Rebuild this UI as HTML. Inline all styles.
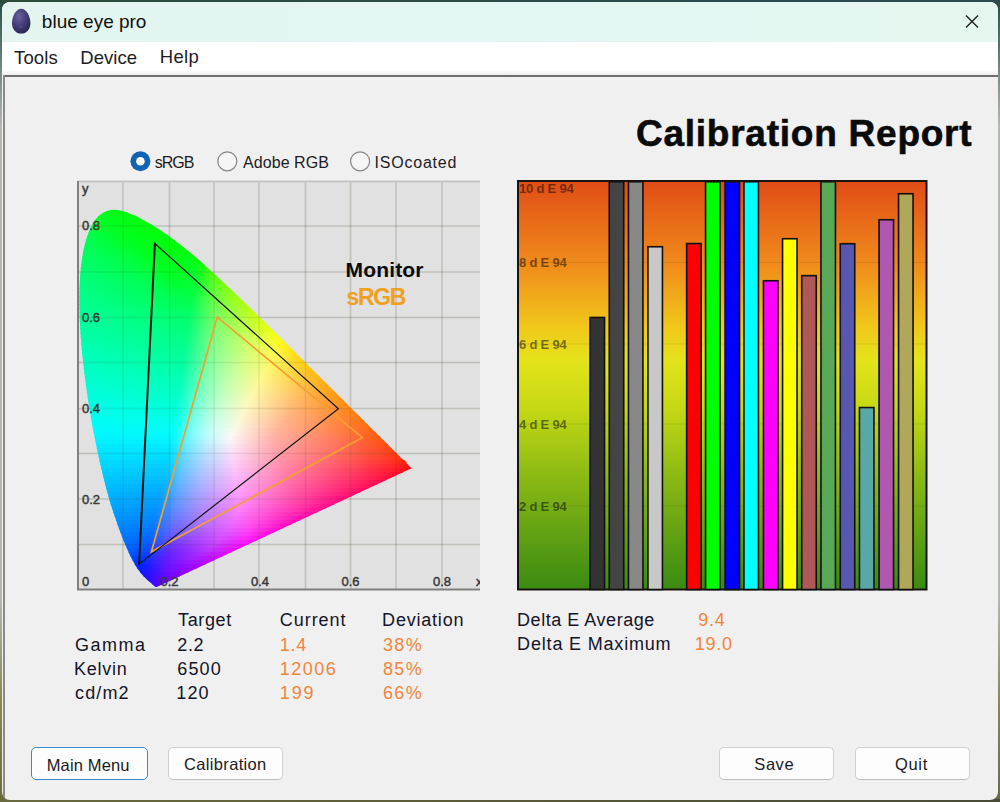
<!DOCTYPE html>
<html><head><meta charset="utf-8">
<style>
*{margin:0;padding:0;box-sizing:border-box}
html,body{width:1000px;height:802px;overflow:hidden;background:linear-gradient(#2a4a44 0px,#2a4a44 2px,#3a6058 20px,#b4b6b0 125px,#b4b6b0 600px,#8a8a50 700px,#6a6a40 802px);font-family:"Liberation Sans",sans-serif}
.abs{position:absolute;white-space:nowrap}
#win{position:absolute;left:2px;top:2px;width:996px;height:798px;border-radius:8px;overflow:hidden;background:#f0f0f0}
#title{position:absolute;left:0;top:0;width:996px;height:40px;background:linear-gradient(90deg,#e4f5f0,#e2f6f4 50%,#e5f7ee)}
#menu{position:absolute;left:0;top:40px;width:996px;height:33px;background:linear-gradient(#ffffff 85%,#ececec)}
#hline{position:absolute;left:1px;top:73px;width:995px;height:2px;background:#6e6e6e}
#vline{position:absolute;left:1px;top:73px;width:2px;height:730px;background:#8a8a8a}
.t16{font-size:16px;color:#1a1a1a}
.tab{font-size:18px;color:#141428;letter-spacing:0.4px}
.or{color:#f2843a}
.btn{position:absolute;height:33px;background:#fdfdfd;border:1px solid #d0d0d0;border-bottom-color:#bdbdbd;border-radius:5px;font-size:16px;color:#1a1a1a;text-align:center;line-height:31px}
</style></head><body>
<div style="position:absolute;left:0;top:0;width:1000px;height:3px;background:linear-gradient(90deg,#2a4a3a,#2e4a48 50%,#2a4a50)"></div>
<div style="position:absolute;left:0;top:799px;width:1000px;height:3px;background:linear-gradient(90deg,#6a6a40,#5a5a38 50%,#4a4a38)"></div>
<div id="win">
 <div id="title"></div>
 <div id="menu"></div>
 <div id="hline"></div>
 <div id="vline"></div>
</div>
<svg class="abs" style="left:0;top:0" width="1000" height="802" viewBox="0 0 1000 802">
 <defs>
  <radialGradient id="egg" cx="0.38" cy="0.32" r="0.8"><stop offset="0" stop-color="#6a62a2"/><stop offset="0.5" stop-color="#423c78"/><stop offset="1" stop-color="#25223f"/></radialGradient>
  <clipPath id="cc"><rect x="78" y="181" width="402" height="409"/></clipPath>
  <clipPath id="hs"><path d="M156.8,587.0 L156.6,587.0 L156.4,587.0 L156.0,586.9 L155.7,586.9 L155.4,586.8 L155.1,586.7 L154.8,586.5 L154.5,586.3 L154.3,586.1 L154.0,585.8 L153.8,585.6 L153.5,585.4 L153.3,585.2 L153.1,585.0 L153.0,584.9 L152.8,584.7 L152.6,584.5 L152.4,584.3 L152.2,584.1 L151.9,583.9 L151.7,583.7 L151.5,583.5 L151.2,583.3 L150.9,583.0 L150.6,582.8 L150.3,582.5 L149.9,582.2 L149.6,581.9 L149.2,581.6 L148.9,581.2 L148.5,580.9 L148.1,580.6 L147.7,580.2 L147.2,579.8 L146.8,579.4 L146.3,579.0 L145.8,578.5 L145.3,578.0 L144.8,577.5 L144.3,577.0 L143.7,576.4 L143.1,575.8 L142.5,575.1 L141.9,574.5 L141.3,573.8 L140.7,573.0 L140.0,572.1 L139.3,571.1 L138.5,570.0 L137.7,568.9 L136.8,567.6 L135.9,566.2 L135.0,564.7 L134.1,563.0 L133.1,561.2 L132.0,559.3 L131.0,557.2 L129.8,555.0 L128.7,552.5 L127.5,549.8 L126.2,546.9 L124.9,543.8 L123.5,540.5 L122.1,536.9 L120.7,533.1 L119.1,528.9 L117.5,524.5 L115.9,519.8 L114.1,514.8 L112.4,509.6 L110.6,503.9 L108.9,498.0 L107.1,491.6 L105.3,485.0 L103.5,477.9 L101.8,470.6 L100.0,463.0 L98.3,455.1 L96.5,446.8 L94.8,438.1 L93.0,429.2 L91.4,420.0 L89.8,410.8 L88.3,401.5 L86.9,392.2 L85.6,382.6 L84.3,372.9 L83.2,363.2 L82.2,353.7 L81.3,344.3 L80.6,335.1 L80.1,326.0 L79.6,317.0 L79.4,308.2 L79.3,299.6 L79.4,291.4 L79.7,283.4 L80.2,275.6 L80.8,268.1 L81.7,260.9 L82.7,254.2 L83.9,248.0 L85.4,242.2 L87.0,236.8 L88.9,231.8 L90.9,227.3 L93.1,223.3 L95.3,219.8 L97.7,217.0 L100.2,214.7 L102.9,212.9 L105.7,211.6 L108.5,210.6 L111.4,209.9 L114.3,209.7 L117.3,209.9 L120.3,210.5 L123.4,211.3 L126.5,212.3 L129.6,213.4 L132.6,214.6 L135.7,216.0 L138.8,217.5 L141.9,219.2 L145.0,220.9 L148.0,222.6 L151.0,224.3 L153.9,226.1 L156.8,227.9 L159.7,229.8 L162.5,231.7 L165.4,233.7 L168.2,235.6 L171.0,237.7 L173.8,239.7 L176.5,241.8 L179.3,243.9 L182.1,246.1 L184.8,248.3 L187.6,250.5 L190.3,252.8 L193.1,255.1 L195.8,257.4 L198.5,259.7 L201.3,262.1 L204.0,264.5 L206.7,266.9 L209.4,269.4 L212.1,271.8 L214.8,274.3 L217.5,276.8 L220.2,279.3 L222.9,281.8 L225.7,284.4 L228.4,286.9 L231.1,289.5 L233.8,292.1 L236.5,294.7 L239.2,297.3 L241.9,299.9 L244.7,302.5 L247.4,305.2 L250.1,307.8 L252.8,310.4 L255.5,313.1 L258.2,315.7 L260.9,318.4 L263.6,321.0 L266.3,323.7 L268.9,326.3 L271.6,329.0 L274.3,331.6 L277.0,334.3 L279.7,336.9 L282.3,339.5 L285.0,342.2 L287.6,344.8 L290.2,347.4 L292.9,350.0 L295.5,352.6 L298.0,355.2 L300.6,357.8 L303.2,360.3 L305.7,362.9 L308.3,365.4 L310.8,367.9 L313.3,370.4 L315.8,372.9 L318.2,375.3 L320.7,377.8 L323.1,380.2 L325.5,382.5 L327.9,384.9 L330.2,387.2 L332.5,389.5 L334.8,391.8 L337.1,394.1 L339.3,396.3 L341.5,398.5 L343.7,400.6 L345.8,402.8 L347.9,404.9 L349.9,406.9 L351.9,408.9 L353.9,410.8 L355.7,412.7 L357.6,414.5 L359.4,416.3 L361.2,418.1 L362.9,419.8 L364.6,421.5 L366.3,423.2 L367.9,424.8 L369.5,426.4 L371.0,427.9 L372.5,429.4 L374.0,430.8 L375.4,432.2 L376.7,433.6 L378.0,434.9 L379.3,436.1 L380.5,437.3 L381.7,438.5 L382.9,439.7 L384.0,440.8 L385.0,441.8 L386.1,442.8 L387.0,443.8 L388.0,444.8 L388.9,445.7 L389.8,446.6 L390.6,447.4 L391.4,448.2 L392.2,449.0 L393.0,449.8 L393.7,450.5 L394.4,451.2 L395.1,451.9 L395.7,452.5 L396.4,453.1 L397.0,453.7 L397.6,454.3 L398.1,454.9 L398.7,455.4 L399.2,455.9 L399.7,456.4 L400.2,456.9 L400.6,457.4 L401.1,457.9 L401.5,458.3 L402.0,458.8 L402.5,459.2 L403.1,459.6 L403.7,460.0 L404.4,460.4 L405.1,460.8 L405.6,461.1 L406.1,461.5 L406.3,461.8 L406.4,462.1 L406.5,462.4 L406.4,462.7 L406.5,463.0 L406.6,463.3 L406.7,463.5 L407.0,463.8 L407.2,464.0 L407.5,464.2 L407.7,464.4 L407.9,464.6 L408.1,464.8 L408.3,465.0 L408.5,465.2 L408.7,465.4 L408.8,465.5 L409.0,465.7 L409.1,465.8 L409.2,465.9 L409.4,466.1 L409.5,466.2 L409.6,466.3 L409.8,466.4 L409.9,466.6 L410.0,466.7 L410.2,466.9 L410.4,467.1 L410.5,467.2 L410.7,467.4 L410.8,467.5 L411.0,467.7 L411.2,467.9 L411.3,468.0 L411.5,468.2 L411.6,468.3Z"/></clipPath>
  <linearGradient id="bg" x1="0" y1="0" x2="0" y2="1">
   <stop offset="0" stop-color="#e04c16"/>
   <stop offset="0.2" stop-color="#f08a1c"/>
   <stop offset="0.36" stop-color="#f0c81a"/>
   <stop offset="0.44" stop-color="#e4e41a"/>
   <stop offset="0.56" stop-color="#c4d814"/>
   <stop offset="0.72" stop-color="#8cba14"/>
   <stop offset="1" stop-color="#3a8a12"/>
  </linearGradient>
  <linearGradient id="r0" gradientUnits="userSpaceOnUse" x1="101" x2="129" y1="0" y2="0"><stop offset="0.000" stop-color="#00ff1d"/><stop offset="1.000" stop-color="#00ff12"/></linearGradient><linearGradient id="r1" gradientUnits="userSpaceOnUse" x1="95" x2="139" y1="0" y2="0"><stop offset="0.000" stop-color="#00ff20"/><stop offset="1.000" stop-color="#00ff0f"/></linearGradient><linearGradient id="r2" gradientUnits="userSpaceOnUse" x1="92" x2="147" y1="0" y2="0"><stop offset="0.000" stop-color="#00ff27"/><stop offset="1.000" stop-color="#00ff0c"/></linearGradient><linearGradient id="r3" gradientUnits="userSpaceOnUse" x1="89" x2="154" y1="0" y2="0"><stop offset="0.000" stop-color="#00ff33"/><stop offset="0.338" stop-color="#00ff1e"/><stop offset="1.000" stop-color="#00ff09"/></linearGradient><linearGradient id="r4" gradientUnits="userSpaceOnUse" x1="87" x2="160" y1="0" y2="0"><stop offset="0.000" stop-color="#00ff3e"/><stop offset="0.342" stop-color="#00ff20"/><stop offset="1.000" stop-color="#00ff08"/></linearGradient><linearGradient id="r5" gradientUnits="userSpaceOnUse" x1="85" x2="166" y1="0" y2="0"><stop offset="0.000" stop-color="#00ff47"/><stop offset="0.395" stop-color="#00ff20"/><stop offset="1.000" stop-color="#00ff06"/></linearGradient><linearGradient id="r6" gradientUnits="userSpaceOnUse" x1="84" x2="172" y1="0" y2="0"><stop offset="0.000" stop-color="#00ff4d"/><stop offset="0.432" stop-color="#00ff20"/><stop offset="1.000" stop-color="#00ff04"/></linearGradient><linearGradient id="r7" gradientUnits="userSpaceOnUse" x1="83" x2="178" y1="0" y2="0"><stop offset="0.000" stop-color="#00ff53"/><stop offset="0.474" stop-color="#00ff1f"/><stop offset="1.000" stop-color="#00ff03"/></linearGradient><linearGradient id="r8" gradientUnits="userSpaceOnUse" x1="81" x2="183" y1="0" y2="0"><stop offset="0.000" stop-color="#00ff59"/><stop offset="0.333" stop-color="#00ff32"/><stop offset="0.539" stop-color="#00ff1e"/><stop offset="1.000" stop-color="#00ff03"/></linearGradient><linearGradient id="r9" gradientUnits="userSpaceOnUse" x1="80" x2="188" y1="0" y2="0"><stop offset="0.000" stop-color="#00ff5e"/><stop offset="0.352" stop-color="#00ff36"/><stop offset="0.546" stop-color="#00ff1f"/><stop offset="0.963" stop-color="#00ff07"/><stop offset="1.000" stop-color="#00ff03"/></linearGradient><linearGradient id="r10" gradientUnits="userSpaceOnUse" x1="80" x2="193" y1="0" y2="0"><stop offset="0.000" stop-color="#00ff62"/><stop offset="0.363" stop-color="#00ff3a"/><stop offset="0.549" stop-color="#00ff20"/><stop offset="0.929" stop-color="#00ff0c"/><stop offset="1.000" stop-color="#00ff03"/></linearGradient><linearGradient id="r11" gradientUnits="userSpaceOnUse" x1="79" x2="198" y1="0" y2="0"><stop offset="0.000" stop-color="#00ff66"/><stop offset="0.378" stop-color="#00ff3e"/><stop offset="0.571" stop-color="#00ff20"/><stop offset="0.908" stop-color="#00ff11"/><stop offset="1.000" stop-color="#01ff02"/></linearGradient><linearGradient id="r12" gradientUnits="userSpaceOnUse" x1="78" x2="202" y1="0" y2="0"><stop offset="0.000" stop-color="#00ff6a"/><stop offset="0.395" stop-color="#00ff41"/><stop offset="0.589" stop-color="#00ff20"/><stop offset="0.903" stop-color="#00ff14"/><stop offset="0.992" stop-color="#09ff03"/><stop offset="1.000" stop-color="#0cff02"/></linearGradient><linearGradient id="r13" gradientUnits="userSpaceOnUse" x1="78" x2="207" y1="0" y2="0"><stop offset="0.000" stop-color="#00ff6e"/><stop offset="0.411" stop-color="#00ff43"/><stop offset="0.605" stop-color="#00ff20"/><stop offset="0.884" stop-color="#00ff1a"/><stop offset="0.953" stop-color="#0cff0a"/><stop offset="1.000" stop-color="#2bff02"/></linearGradient><linearGradient id="r14" gradientUnits="userSpaceOnUse" x1="77" x2="211" y1="0" y2="0"><stop offset="0.000" stop-color="#00ff72"/><stop offset="0.425" stop-color="#00ff46"/><stop offset="0.627" stop-color="#00ff20"/><stop offset="0.873" stop-color="#00ff1f"/><stop offset="0.933" stop-color="#14ff11"/><stop offset="1.000" stop-color="#44ff02"/></linearGradient><linearGradient id="r15" gradientUnits="userSpaceOnUse" x1="77" x2="216" y1="0" y2="0"><stop offset="0.000" stop-color="#00ff75"/><stop offset="0.432" stop-color="#00ff4a"/><stop offset="0.633" stop-color="#00ff21"/><stop offset="0.856" stop-color="#03ff25"/><stop offset="0.914" stop-color="#23ff17"/><stop offset="1.000" stop-color="#5bff02"/></linearGradient><linearGradient id="r16" gradientUnits="userSpaceOnUse" x1="77" x2="220" y1="0" y2="0"><stop offset="0.000" stop-color="#00ff79"/><stop offset="0.441" stop-color="#00ff4d"/><stop offset="0.643" stop-color="#00ff24"/><stop offset="0.839" stop-color="#06ff2b"/><stop offset="0.972" stop-color="#5fff07"/><stop offset="1.000" stop-color="#6aff02"/></linearGradient><linearGradient id="r17" gradientUnits="userSpaceOnUse" x1="76" x2="224" y1="0" y2="0"><stop offset="0.000" stop-color="#00ff7d"/><stop offset="0.453" stop-color="#00ff50"/><stop offset="0.642" stop-color="#00ff28"/><stop offset="0.811" stop-color="#05ff31"/><stop offset="0.872" stop-color="#30ff2a"/><stop offset="0.953" stop-color="#65ff0e"/><stop offset="1.000" stop-color="#76ff02"/></linearGradient><linearGradient id="r18" gradientUnits="userSpaceOnUse" x1="76" x2="229" y1="0" y2="0"><stop offset="0.000" stop-color="#00ff80"/><stop offset="0.458" stop-color="#00ff52"/><stop offset="0.647" stop-color="#00ff2e"/><stop offset="0.784" stop-color="#06ff36"/><stop offset="0.889" stop-color="#55ff28"/><stop offset="0.993" stop-color="#82ff02"/><stop offset="1.000" stop-color="#84ff01"/></linearGradient><linearGradient id="r19" gradientUnits="userSpaceOnUse" x1="76" x2="233" y1="0" y2="0"><stop offset="0.000" stop-color="#00ff83"/><stop offset="0.465" stop-color="#00ff55"/><stop offset="0.656" stop-color="#00ff35"/><stop offset="0.758" stop-color="#05ff3a"/><stop offset="0.828" stop-color="#3cff39"/><stop offset="0.911" stop-color="#70ff21"/><stop offset="0.994" stop-color="#8dff02"/><stop offset="1.000" stop-color="#8eff01"/></linearGradient><linearGradient id="r20" gradientUnits="userSpaceOnUse" x1="76" x2="237" y1="0" y2="0"><stop offset="0.000" stop-color="#00ff86"/><stop offset="0.472" stop-color="#00ff58"/><stop offset="0.671" stop-color="#00ff3b"/><stop offset="0.745" stop-color="#0aff3f"/><stop offset="0.857" stop-color="#62ff38"/><stop offset="0.994" stop-color="#97ff02"/><stop offset="1.000" stop-color="#98ff01"/></linearGradient><linearGradient id="r21" gradientUnits="userSpaceOnUse" x1="76" x2="241" y1="0" y2="0"><stop offset="0.000" stop-color="#00ff8a"/><stop offset="0.479" stop-color="#00ff5b"/><stop offset="0.697" stop-color="#01ff42"/><stop offset="0.739" stop-color="#15ff44"/><stop offset="0.836" stop-color="#65ff41"/><stop offset="0.939" stop-color="#90ff16"/><stop offset="1.000" stop-color="#a2ff02"/></linearGradient><linearGradient id="r22" gradientUnits="userSpaceOnUse" x1="76" x2="246" y1="0" y2="0"><stop offset="0.000" stop-color="#00ff8d"/><stop offset="0.476" stop-color="#00ff5e"/><stop offset="0.688" stop-color="#05ff48"/><stop offset="0.747" stop-color="#35ff4a"/><stop offset="0.829" stop-color="#71ff44"/><stop offset="0.935" stop-color="#9aff16"/><stop offset="1.000" stop-color="#adff01"/></linearGradient><linearGradient id="r23" gradientUnits="userSpaceOnUse" x1="76" x2="250" y1="0" y2="0"><stop offset="0.000" stop-color="#00ff90"/><stop offset="0.483" stop-color="#00ff61"/><stop offset="0.667" stop-color="#04ff50"/><stop offset="0.718" stop-color="#2dff4f"/><stop offset="0.805" stop-color="#70ff4d"/><stop offset="0.914" stop-color="#9dff24"/><stop offset="0.989" stop-color="#b3ff03"/><stop offset="1.000" stop-color="#b6ff01"/></linearGradient><linearGradient id="r24" gradientUnits="userSpaceOnUse" x1="76" x2="254" y1="0" y2="0"><stop offset="0.000" stop-color="#00ff93"/><stop offset="0.489" stop-color="#00ff64"/><stop offset="0.652" stop-color="#05ff58"/><stop offset="0.719" stop-color="#40ff56"/><stop offset="0.803" stop-color="#7bff50"/><stop offset="0.916" stop-color="#a7ff25"/><stop offset="0.989" stop-color="#bcff03"/><stop offset="1.000" stop-color="#bfff01"/></linearGradient><linearGradient id="r25" gradientUnits="userSpaceOnUse" x1="76" x2="258" y1="0" y2="0"><stop offset="0.000" stop-color="#00ff96"/><stop offset="0.632" stop-color="#04ff5f"/><stop offset="0.681" stop-color="#2eff5c"/><stop offset="0.769" stop-color="#75ff59"/><stop offset="0.896" stop-color="#a9ff32"/><stop offset="0.989" stop-color="#c5ff03"/><stop offset="1.000" stop-color="#c8ff01"/></linearGradient><linearGradient id="r26" gradientUnits="userSpaceOnUse" x1="76" x2="262" y1="0" y2="0"><stop offset="0.000" stop-color="#00ff99"/><stop offset="0.613" stop-color="#04ff66"/><stop offset="0.656" stop-color="#26ff64"/><stop offset="0.742" stop-color="#71ff60"/><stop offset="0.887" stop-color="#afff38"/><stop offset="0.989" stop-color="#ceff03"/><stop offset="1.000" stop-color="#d1ff01"/></linearGradient><linearGradient id="r27" gradientUnits="userSpaceOnUse" x1="76" x2="266" y1="0" y2="0"><stop offset="0.000" stop-color="#00ff9d"/><stop offset="0.600" stop-color="#05ff6b"/><stop offset="0.653" stop-color="#34ff69"/><stop offset="0.737" stop-color="#7aff65"/><stop offset="0.889" stop-color="#b9ff39"/><stop offset="0.989" stop-color="#d7ff03"/><stop offset="1.000" stop-color="#daff01"/></linearGradient><linearGradient id="r28" gradientUnits="userSpaceOnUse" x1="76" x2="270" y1="0" y2="0"><stop offset="0.000" stop-color="#00ffa0"/><stop offset="0.582" stop-color="#04ff71"/><stop offset="0.629" stop-color="#2cff6f"/><stop offset="0.716" stop-color="#7aff6b"/><stop offset="0.881" stop-color="#bfff3f"/><stop offset="0.990" stop-color="#e0fe03"/><stop offset="1.000" stop-color="#e3fe02"/></linearGradient><linearGradient id="r29" gradientUnits="userSpaceOnUse" x1="76" x2="274" y1="0" y2="0"><stop offset="0.000" stop-color="#00ffa3"/><stop offset="0.566" stop-color="#03ff76"/><stop offset="0.606" stop-color="#24ff75"/><stop offset="0.697" stop-color="#79ff71"/><stop offset="0.859" stop-color="#bfff4a"/><stop offset="0.944" stop-color="#dcfe1b"/><stop offset="1.000" stop-color="#ecfe02"/></linearGradient><linearGradient id="r30" gradientUnits="userSpaceOnUse" x1="77" x2="278" y1="0" y2="0"><stop offset="0.000" stop-color="#00ffa6"/><stop offset="0.552" stop-color="#04ff7b"/><stop offset="0.597" stop-color="#2dff7a"/><stop offset="0.687" stop-color="#7fff75"/><stop offset="0.866" stop-color="#cbff49"/><stop offset="0.955" stop-color="#e8fe15"/><stop offset="1.000" stop-color="#f4fe02"/></linearGradient><linearGradient id="r31" gradientUnits="userSpaceOnUse" x1="77" x2="282" y1="0" y2="0"><stop offset="0.000" stop-color="#00ffa9"/><stop offset="0.537" stop-color="#04ff80"/><stop offset="0.576" stop-color="#25ff7f"/><stop offset="0.668" stop-color="#7eff7b"/><stop offset="0.834" stop-color="#c8ff56"/><stop offset="0.927" stop-color="#e8fe2b"/><stop offset="0.990" stop-color="#fafd04"/><stop offset="1.000" stop-color="#fbfc02"/></linearGradient><linearGradient id="r32" gradientUnits="userSpaceOnUse" x1="77" x2="286" y1="0" y2="0"><stop offset="0.000" stop-color="#00ffac"/><stop offset="0.526" stop-color="#05ff85"/><stop offset="0.574" stop-color="#34ff84"/><stop offset="0.660" stop-color="#84ff80"/><stop offset="0.842" stop-color="#d4ff56"/><stop offset="0.928" stop-color="#f1fe2c"/><stop offset="0.990" stop-color="#fef804"/><stop offset="1.000" stop-color="#fef602"/></linearGradient><linearGradient id="r33" gradientUnits="userSpaceOnUse" x1="78" x2="290" y1="0" y2="0"><stop offset="0.000" stop-color="#00ffaf"/><stop offset="0.509" stop-color="#04ff8a"/><stop offset="0.552" stop-color="#2cff89"/><stop offset="0.642" stop-color="#84ff85"/><stop offset="0.811" stop-color="#d1ff62"/><stop offset="0.915" stop-color="#f5fe37"/><stop offset="0.991" stop-color="#fef104"/><stop offset="1.000" stop-color="#feee02"/></linearGradient><linearGradient id="r34" gradientUnits="userSpaceOnUse" x1="78" x2="294" y1="0" y2="0"><stop offset="0.000" stop-color="#00ffb3"/><stop offset="0.495" stop-color="#03ff8f"/><stop offset="0.532" stop-color="#24ff8e"/><stop offset="0.625" stop-color="#83ff8a"/><stop offset="0.778" stop-color="#cdff6d"/><stop offset="0.903" stop-color="#f9fd40"/><stop offset="0.991" stop-color="#fee804"/><stop offset="1.000" stop-color="#fee602"/></linearGradient><linearGradient id="r35" gradientUnits="userSpaceOnUse" x1="78" x2="298" y1="0" y2="0"><stop offset="0.000" stop-color="#00ffb6"/><stop offset="0.486" stop-color="#04ff93"/><stop offset="0.532" stop-color="#32ff92"/><stop offset="0.618" stop-color="#89ff8f"/><stop offset="0.791" stop-color="#dafe6d"/><stop offset="0.900" stop-color="#fdf943"/><stop offset="0.991" stop-color="#fee104"/><stop offset="1.000" stop-color="#fede02"/></linearGradient><linearGradient id="r36" gradientUnits="userSpaceOnUse" x1="79" x2="302" y1="0" y2="0"><stop offset="0.000" stop-color="#00ffb9"/><stop offset="0.471" stop-color="#04ff98"/><stop offset="0.511" stop-color="#2aff97"/><stop offset="0.601" stop-color="#89ff94"/><stop offset="0.762" stop-color="#d8fe76"/><stop offset="0.879" stop-color="#fef84f"/><stop offset="0.991" stop-color="#ffd904"/><stop offset="1.000" stop-color="#ffd702"/></linearGradient><linearGradient id="r37" gradientUnits="userSpaceOnUse" x1="79" x2="306" y1="0" y2="0"><stop offset="0.000" stop-color="#00ffbc"/><stop offset="0.463" stop-color="#05ff9d"/><stop offset="0.507" stop-color="#33ff9c"/><stop offset="0.586" stop-color="#89ff99"/><stop offset="0.731" stop-color="#d4ff80"/><stop offset="0.855" stop-color="#fef85b"/><stop offset="0.947" stop-color="#ffdc1f"/><stop offset="1.000" stop-color="#ffd002"/></linearGradient><linearGradient id="r38" gradientUnits="userSpaceOnUse" x1="79" x2="310" y1="0" y2="0"><stop offset="0.000" stop-color="#00ffc0"/><stop offset="0.450" stop-color="#04ffa2"/><stop offset="0.489" stop-color="#2bffa1"/><stop offset="0.571" stop-color="#88ff9e"/><stop offset="0.706" stop-color="#d1ff89"/><stop offset="0.827" stop-color="#fdf968"/><stop offset="0.935" stop-color="#ffd82a"/><stop offset="0.991" stop-color="#ffcb04"/><stop offset="1.000" stop-color="#ffc902"/></linearGradient><linearGradient id="r39" gradientUnits="userSpaceOnUse" x1="80" x2="314" y1="0" y2="0"><stop offset="0.000" stop-color="#00ffc3"/><stop offset="0.436" stop-color="#03ffa6"/><stop offset="0.470" stop-color="#23ffa6"/><stop offset="0.556" stop-color="#88ffa3"/><stop offset="0.675" stop-color="#ccff92"/><stop offset="0.803" stop-color="#fdf971"/><stop offset="0.932" stop-color="#ffd22c"/><stop offset="0.991" stop-color="#ffc404"/><stop offset="1.000" stop-color="#ffc202"/></linearGradient><linearGradient id="r40" gradientUnits="userSpaceOnUse" x1="80" x2="318" y1="0" y2="0"><stop offset="0.000" stop-color="#00ffc6"/><stop offset="0.429" stop-color="#04ffab"/><stop offset="0.466" stop-color="#2cffaa"/><stop offset="0.542" stop-color="#88ffa8"/><stop offset="0.651" stop-color="#caff99"/><stop offset="0.782" stop-color="#fdf97a"/><stop offset="0.929" stop-color="#ffcc2f"/><stop offset="0.992" stop-color="#ffbd04"/><stop offset="1.000" stop-color="#ffbc02"/></linearGradient><linearGradient id="r41" gradientUnits="userSpaceOnUse" x1="81" x2="322" y1="0" y2="0"><stop offset="0.000" stop-color="#00ffca"/><stop offset="0.415" stop-color="#04ffb0"/><stop offset="0.452" stop-color="#2affaf"/><stop offset="0.527" stop-color="#87ffad"/><stop offset="0.627" stop-color="#c6ffa1"/><stop offset="0.755" stop-color="#fdfa84"/><stop offset="0.929" stop-color="#ffc52e"/><stop offset="0.992" stop-color="#ffb704"/><stop offset="1.000" stop-color="#ffb502"/></linearGradient><linearGradient id="r42" gradientUnits="userSpaceOnUse" x1="81" x2="326" y1="0" y2="0"><stop offset="0.000" stop-color="#00ffcd"/><stop offset="0.408" stop-color="#05ffb5"/><stop offset="0.449" stop-color="#33ffb4"/><stop offset="0.514" stop-color="#87ffb2"/><stop offset="0.608" stop-color="#c5ffa7"/><stop offset="0.735" stop-color="#fdfa8c"/><stop offset="0.927" stop-color="#ffbf30"/><stop offset="0.996" stop-color="#ffb003"/><stop offset="1.000" stop-color="#ffaf02"/></linearGradient><linearGradient id="r43" gradientUnits="userSpaceOnUse" x1="82" x2="330" y1="0" y2="0"><stop offset="0.000" stop-color="#00ffd1"/><stop offset="0.395" stop-color="#04ffb9"/><stop offset="0.431" stop-color="#2bffb9"/><stop offset="0.500" stop-color="#86ffb7"/><stop offset="0.589" stop-color="#c4ffae"/><stop offset="0.714" stop-color="#fdf994"/><stop offset="0.927" stop-color="#ffb82f"/><stop offset="0.996" stop-color="#ffaa03"/><stop offset="1.000" stop-color="#ffa902"/></linearGradient><linearGradient id="r44" gradientUnits="userSpaceOnUse" x1="82" x2="334" y1="0" y2="0"><stop offset="0.000" stop-color="#00ffd4"/><stop offset="0.385" stop-color="#03ffbe"/><stop offset="0.417" stop-color="#23ffbe"/><stop offset="0.488" stop-color="#86ffbc"/><stop offset="0.571" stop-color="#c3ffb4"/><stop offset="0.694" stop-color="#fdf99c"/><stop offset="0.913" stop-color="#ffb539"/><stop offset="0.996" stop-color="#ffa403"/><stop offset="1.000" stop-color="#ffa302"/></linearGradient><linearGradient id="r45" gradientUnits="userSpaceOnUse" x1="83" x2="339" y1="0" y2="0"><stop offset="0.000" stop-color="#00ffd8"/><stop offset="0.375" stop-color="#04ffc3"/><stop offset="0.410" stop-color="#2dffc3"/><stop offset="0.473" stop-color="#86ffc1"/><stop offset="0.555" stop-color="#c4ffba"/><stop offset="0.672" stop-color="#fdf9a3"/><stop offset="0.883" stop-color="#ffb546"/><stop offset="0.996" stop-color="#ff9d02"/><stop offset="1.000" stop-color="#ff9d01"/></linearGradient><linearGradient id="r46" gradientUnits="userSpaceOnUse" x1="83" x2="343" y1="0" y2="0"><stop offset="0.000" stop-color="#00ffdb"/><stop offset="0.365" stop-color="#04ffc8"/><stop offset="0.396" stop-color="#25ffc8"/><stop offset="0.458" stop-color="#81ffc7"/><stop offset="0.535" stop-color="#c0ffc1"/><stop offset="0.650" stop-color="#fcfaac"/><stop offset="0.858" stop-color="#ffb552"/><stop offset="0.950" stop-color="#ffa01c"/><stop offset="1.000" stop-color="#ff9701"/></linearGradient><linearGradient id="r47" gradientUnits="userSpaceOnUse" x1="84" x2="347" y1="0" y2="0"><stop offset="0.000" stop-color="#00fedf"/><stop offset="0.357" stop-color="#05ffcd"/><stop offset="0.392" stop-color="#2fffcd"/><stop offset="0.445" stop-color="#81ffcc"/><stop offset="0.521" stop-color="#c2ffc7"/><stop offset="0.631" stop-color="#fcfab3"/><stop offset="0.833" stop-color="#ffb45b"/><stop offset="0.943" stop-color="#ff9b22"/><stop offset="0.996" stop-color="#ff9202"/><stop offset="1.000" stop-color="#ff9101"/></linearGradient><linearGradient id="r48" gradientUnits="userSpaceOnUse" x1="85" x2="351" y1="0" y2="0"><stop offset="0.000" stop-color="#00fee3"/><stop offset="0.346" stop-color="#04ffd2"/><stop offset="0.376" stop-color="#26ffd2"/><stop offset="0.432" stop-color="#81ffd1"/><stop offset="0.508" stop-color="#c3ffcc"/><stop offset="0.613" stop-color="#fcfaba"/><stop offset="0.808" stop-color="#ffb465"/><stop offset="0.936" stop-color="#ff9727"/><stop offset="0.996" stop-color="#ff8c02"/><stop offset="1.000" stop-color="#ff8b01"/></linearGradient><linearGradient id="r49" gradientUnits="userSpaceOnUse" x1="85" x2="355" y1="0" y2="0"><stop offset="0.000" stop-color="#00fee7"/><stop offset="0.337" stop-color="#03ffd8"/><stop offset="0.367" stop-color="#24ffd7"/><stop offset="0.422" stop-color="#81ffd7"/><stop offset="0.496" stop-color="#c4ffd2"/><stop offset="0.596" stop-color="#fcfac1"/><stop offset="0.785" stop-color="#ffb46d"/><stop offset="0.933" stop-color="#ff9229"/><stop offset="0.996" stop-color="#ff8602"/><stop offset="1.000" stop-color="#ff8601"/></linearGradient><linearGradient id="r50" gradientUnits="userSpaceOnUse" x1="86" x2="359" y1="0" y2="0"><stop offset="0.000" stop-color="#00feeb"/><stop offset="0.330" stop-color="#04fedd"/><stop offset="0.359" stop-color="#29ffdd"/><stop offset="0.410" stop-color="#81ffdc"/><stop offset="0.487" stop-color="#c8fed8"/><stop offset="0.579" stop-color="#fcf9c8"/><stop offset="0.762" stop-color="#ffb475"/><stop offset="0.930" stop-color="#ff8c2b"/><stop offset="0.996" stop-color="#ff8002"/><stop offset="1.000" stop-color="#ff8001"/></linearGradient><linearGradient id="r51" gradientUnits="userSpaceOnUse" x1="86" x2="363" y1="0" y2="0"><stop offset="0.000" stop-color="#00feee"/><stop offset="0.321" stop-color="#04fee2"/><stop offset="0.347" stop-color="#20fee2"/><stop offset="0.397" stop-color="#7cfee2"/><stop offset="0.469" stop-color="#c4ffdf"/><stop offset="0.563" stop-color="#fcf9cf"/><stop offset="0.740" stop-color="#ffb37d"/><stop offset="0.931" stop-color="#ff862b"/><stop offset="0.996" stop-color="#ff7b02"/><stop offset="1.000" stop-color="#ff7a01"/></linearGradient><linearGradient id="r52" gradientUnits="userSpaceOnUse" x1="87" x2="367" y1="0" y2="0"><stop offset="0.000" stop-color="#00fdf1"/><stop offset="0.314" stop-color="#05fee8"/><stop offset="0.339" stop-color="#25fee8"/><stop offset="0.386" stop-color="#7cfee8"/><stop offset="0.457" stop-color="#c5fee5"/><stop offset="0.546" stop-color="#fcf9d6"/><stop offset="0.718" stop-color="#ffb384"/><stop offset="0.929" stop-color="#ff812d"/><stop offset="0.996" stop-color="#ff7502"/><stop offset="1.000" stop-color="#ff7401"/></linearGradient><linearGradient id="r53" gradientUnits="userSpaceOnUse" x1="88" x2="371" y1="0" y2="0"><stop offset="0.000" stop-color="#00fcf4"/><stop offset="0.304" stop-color="#04feee"/><stop offset="0.329" stop-color="#23feee"/><stop offset="0.375" stop-color="#7cfeed"/><stop offset="0.445" stop-color="#c6feeb"/><stop offset="0.530" stop-color="#fcf9dd"/><stop offset="0.696" stop-color="#ffb38b"/><stop offset="0.929" stop-color="#ff7b2c"/><stop offset="0.996" stop-color="#ff6f02"/><stop offset="1.000" stop-color="#ff6e01"/></linearGradient><linearGradient id="r54" gradientUnits="userSpaceOnUse" x1="89" x2="375" y1="0" y2="0"><stop offset="0.000" stop-color="#00faf7"/><stop offset="0.294" stop-color="#03fef3"/><stop offset="0.318" stop-color="#21fef3"/><stop offset="0.364" stop-color="#7cfef3"/><stop offset="0.434" stop-color="#c7fef1"/><stop offset="0.514" stop-color="#fcf9e4"/><stop offset="0.675" stop-color="#ffb392"/><stop offset="0.930" stop-color="#ff752c"/><stop offset="0.997" stop-color="#ff6902"/><stop offset="1.000" stop-color="#ff6801"/></linearGradient><linearGradient id="r55" gradientUnits="userSpaceOnUse" x1="89" x2="379" y1="0" y2="0"><stop offset="0.000" stop-color="#00f9fa"/><stop offset="0.290" stop-color="#04fdf8"/><stop offset="0.314" stop-color="#26fdf8"/><stop offset="0.355" stop-color="#7cfdf8"/><stop offset="0.424" stop-color="#c8fef7"/><stop offset="0.497" stop-color="#fbfaec"/><stop offset="0.655" stop-color="#ffb299"/><stop offset="0.931" stop-color="#ff6f2b"/><stop offset="0.997" stop-color="#ff6302"/><stop offset="1.000" stop-color="#ff6201"/></linearGradient><linearGradient id="r56" gradientUnits="userSpaceOnUse" x1="90" x2="383" y1="0" y2="0"><stop offset="0.000" stop-color="#00f7fd"/><stop offset="0.280" stop-color="#04fafb"/><stop offset="0.300" stop-color="#1dfafc"/><stop offset="0.345" stop-color="#7bfbfc"/><stop offset="0.413" stop-color="#c8fcfc"/><stop offset="0.485" stop-color="#fcf8f2"/><stop offset="0.635" stop-color="#ffb2a0"/><stop offset="0.915" stop-color="#ff6c34"/><stop offset="1.000" stop-color="#ff5c01"/></linearGradient><linearGradient id="r57" gradientUnits="userSpaceOnUse" x1="91" x2="387" y1="0" y2="0"><stop offset="0.000" stop-color="#00f4fe"/><stop offset="0.274" stop-color="#05f6fe"/><stop offset="0.294" stop-color="#22f6fe"/><stop offset="0.331" stop-color="#73f6fe"/><stop offset="0.395" stop-color="#c0f8fe"/><stop offset="0.470" stop-color="#fbf7f8"/><stop offset="0.622" stop-color="#ffafa4"/><stop offset="0.902" stop-color="#ff683a"/><stop offset="1.000" stop-color="#ff5501"/></linearGradient><linearGradient id="r58" gradientUnits="userSpaceOnUse" x1="92" x2="391" y1="0" y2="0"><stop offset="0.000" stop-color="#00f0fe"/><stop offset="0.264" stop-color="#04f1fe"/><stop offset="0.284" stop-color="#20f1fe"/><stop offset="0.321" stop-color="#71f0fe"/><stop offset="0.385" stop-color="#bdf2fe"/><stop offset="0.462" stop-color="#fbf2f9"/><stop offset="0.612" stop-color="#ffaba7"/><stop offset="0.900" stop-color="#ff623b"/><stop offset="1.000" stop-color="#ff4e01"/></linearGradient><linearGradient id="r59" gradientUnits="userSpaceOnUse" x1="92" x2="395" y1="0" y2="0"><stop offset="0.000" stop-color="#00ebfe"/><stop offset="0.257" stop-color="#03ebfe"/><stop offset="0.277" stop-color="#1eebfe"/><stop offset="0.314" stop-color="#6eeafe"/><stop offset="0.376" stop-color="#b9ebfe"/><stop offset="0.459" stop-color="#fbebf9"/><stop offset="0.607" stop-color="#ffa6a8"/><stop offset="0.908" stop-color="#ff5a37"/><stop offset="1.000" stop-color="#ff4701"/></linearGradient><linearGradient id="r60" gradientUnits="userSpaceOnUse" x1="93" x2="399" y1="0" y2="0"><stop offset="0.000" stop-color="#00e7fe"/><stop offset="0.252" stop-color="#05e5fe"/><stop offset="0.271" stop-color="#23e5fe"/><stop offset="0.304" stop-color="#6ce4fe"/><stop offset="0.366" stop-color="#b6e5fe"/><stop offset="0.451" stop-color="#fbe5fa"/><stop offset="0.605" stop-color="#ffa0a7"/><stop offset="0.931" stop-color="#ff4d2b"/><stop offset="1.000" stop-color="#ff3f01"/></linearGradient><linearGradient id="r61" gradientUnits="userSpaceOnUse" x1="94" x2="403" y1="0" y2="0"><stop offset="0.000" stop-color="#00e3ff"/><stop offset="0.243" stop-color="#04dfff"/><stop offset="0.262" stop-color="#21dfff"/><stop offset="0.298" stop-color="#6fdeff"/><stop offset="0.366" stop-color="#bcdfff"/><stop offset="0.447" stop-color="#fbdefa"/><stop offset="0.599" stop-color="#ff9ba8"/><stop offset="0.932" stop-color="#ff462b"/><stop offset="1.000" stop-color="#ff3601"/></linearGradient><linearGradient id="r62" gradientUnits="userSpaceOnUse" x1="95" x2="407" y1="0" y2="0"><stop offset="0.000" stop-color="#00deff"/><stop offset="0.234" stop-color="#04daff"/><stop offset="0.253" stop-color="#20d9ff"/><stop offset="0.288" stop-color="#6dd8ff"/><stop offset="0.356" stop-color="#b9d9ff"/><stop offset="0.442" stop-color="#fcd7f9"/><stop offset="0.593" stop-color="#ff95a9"/><stop offset="0.933" stop-color="#ff3d2a"/><stop offset="1.000" stop-color="#ff2a01"/></linearGradient><linearGradient id="r63" gradientUnits="userSpaceOnUse" x1="96" x2="411" y1="0" y2="0"><stop offset="0.000" stop-color="#00daff"/><stop offset="0.225" stop-color="#03d4ff"/><stop offset="0.244" stop-color="#1ed3ff"/><stop offset="0.279" stop-color="#6bd2ff"/><stop offset="0.346" stop-color="#b6d3ff"/><stop offset="0.435" stop-color="#fbd2fa"/><stop offset="0.590" stop-color="#ff8fa8"/><stop offset="0.933" stop-color="#ff332a"/><stop offset="1.000" stop-color="#ff1c01"/></linearGradient><linearGradient id="r64" gradientUnits="userSpaceOnUse" x1="97" x2="415" y1="0" y2="0"><stop offset="0.000" stop-color="#00d5ff"/><stop offset="0.220" stop-color="#05ceff"/><stop offset="0.239" stop-color="#24cdff"/><stop offset="0.270" stop-color="#69ccff"/><stop offset="0.336" stop-color="#b3cdff"/><stop offset="0.431" stop-color="#fbcbfa"/><stop offset="0.585" stop-color="#ff89a9"/><stop offset="0.931" stop-color="#ff272b"/><stop offset="1.000" stop-color="#ff0b02"/></linearGradient><linearGradient id="r65" gradientUnits="userSpaceOnUse" x1="98" x2="415" y1="0" y2="0"><stop offset="0.000" stop-color="#00d1ff"/><stop offset="0.215" stop-color="#05c8ff"/><stop offset="0.233" stop-color="#23c8ff"/><stop offset="0.265" stop-color="#67c7ff"/><stop offset="0.331" stop-color="#b0c7ff"/><stop offset="0.432" stop-color="#fcc4f9"/><stop offset="0.587" stop-color="#ff83aa"/><stop offset="0.927" stop-color="#ff1d33"/><stop offset="1.000" stop-color="#ff0306"/></linearGradient><linearGradient id="r66" gradientUnits="userSpaceOnUse" x1="99" x2="407" y1="0" y2="0"><stop offset="0.000" stop-color="#00ccff"/><stop offset="0.214" stop-color="#04c3ff"/><stop offset="0.234" stop-color="#22c2ff"/><stop offset="0.266" stop-color="#65c1ff"/><stop offset="0.334" stop-color="#aec1ff"/><stop offset="0.442" stop-color="#fbbefa"/><stop offset="0.607" stop-color="#ff7da9"/><stop offset="0.922" stop-color="#ff1e43"/><stop offset="1.000" stop-color="#ff021f"/></linearGradient><linearGradient id="r67" gradientUnits="userSpaceOnUse" x1="100" x2="398" y1="0" y2="0"><stop offset="0.000" stop-color="#00c8ff"/><stop offset="0.215" stop-color="#04bdff"/><stop offset="0.235" stop-color="#21bcff"/><stop offset="0.268" stop-color="#63bbff"/><stop offset="0.339" stop-color="#abbbff"/><stop offset="0.456" stop-color="#fcb7fa"/><stop offset="0.628" stop-color="#ff77aa"/><stop offset="0.923" stop-color="#ff1e4f"/><stop offset="1.000" stop-color="#ff0235"/></linearGradient><linearGradient id="r68" gradientUnits="userSpaceOnUse" x1="101" x2="390" y1="0" y2="0"><stop offset="0.000" stop-color="#00c3ff"/><stop offset="0.215" stop-color="#04b8ff"/><stop offset="0.235" stop-color="#20b6ff"/><stop offset="0.270" stop-color="#61b5ff"/><stop offset="0.343" stop-color="#a8b5ff"/><stop offset="0.467" stop-color="#fbb1fb"/><stop offset="0.651" stop-color="#ff6fa9"/><stop offset="0.920" stop-color="#ff1d5a"/><stop offset="1.000" stop-color="#ff0243"/></linearGradient><linearGradient id="r69" gradientUnits="userSpaceOnUse" x1="102" x2="381" y1="0" y2="0"><stop offset="0.000" stop-color="#00beff"/><stop offset="0.215" stop-color="#04b2ff"/><stop offset="0.237" stop-color="#1fb1ff"/><stop offset="0.276" stop-color="#64afff"/><stop offset="0.358" stop-color="#aeafff"/><stop offset="0.484" stop-color="#fcaafa"/><stop offset="0.674" stop-color="#ff69aa"/><stop offset="0.921" stop-color="#ff1d65"/><stop offset="1.000" stop-color="#ff0250"/></linearGradient><linearGradient id="r70" gradientUnits="userSpaceOnUse" x1="103" x2="373" y1="0" y2="0"><stop offset="0.000" stop-color="#00baff"/><stop offset="0.215" stop-color="#04adff"/><stop offset="0.241" stop-color="#25abff"/><stop offset="0.278" stop-color="#63a9ff"/><stop offset="0.363" stop-color="#aca9ff"/><stop offset="0.500" stop-color="#fca3fa"/><stop offset="0.696" stop-color="#ff62ab"/><stop offset="0.919" stop-color="#ff1c6f"/><stop offset="1.000" stop-color="#ff025a"/></linearGradient><linearGradient id="r71" gradientUnits="userSpaceOnUse" x1="104" x2="364" y1="0" y2="0"><stop offset="0.000" stop-color="#00b5ff"/><stop offset="0.215" stop-color="#04a7ff"/><stop offset="0.242" stop-color="#24a5ff"/><stop offset="0.281" stop-color="#61a3ff"/><stop offset="0.369" stop-color="#a9a2ff"/><stop offset="0.519" stop-color="#fc9bfa"/><stop offset="0.723" stop-color="#ff5bab"/><stop offset="0.923" stop-color="#ff1a77"/><stop offset="1.000" stop-color="#ff0265"/></linearGradient><linearGradient id="r72" gradientUnits="userSpaceOnUse" x1="105" x2="356" y1="0" y2="0"><stop offset="0.000" stop-color="#00b0ff"/><stop offset="0.215" stop-color="#04a2ff"/><stop offset="0.243" stop-color="#249fff"/><stop offset="0.287" stop-color="#649dff"/><stop offset="0.386" stop-color="#ae9cff"/><stop offset="0.534" stop-color="#fc95fa"/><stop offset="0.753" stop-color="#ff51ab"/><stop offset="0.936" stop-color="#ff127d"/><stop offset="1.000" stop-color="#ff016f"/></linearGradient><linearGradient id="r73" gradientUnits="userSpaceOnUse" x1="106" x2="347" y1="0" y2="0"><stop offset="0.000" stop-color="#00acff"/><stop offset="0.216" stop-color="#049cff"/><stop offset="0.245" stop-color="#239aff"/><stop offset="0.290" stop-color="#6297ff"/><stop offset="0.398" stop-color="#ae96ff"/><stop offset="0.556" stop-color="#fc8dfa"/><stop offset="0.784" stop-color="#ff49ac"/><stop offset="0.996" stop-color="#ff027a"/><stop offset="1.000" stop-color="#ff0279"/></linearGradient><linearGradient id="r74" gradientUnits="userSpaceOnUse" x1="107" x2="338" y1="0" y2="0"><stop offset="0.000" stop-color="#00a7ff"/><stop offset="0.216" stop-color="#0497ff"/><stop offset="0.247" stop-color="#2294ff"/><stop offset="0.294" stop-color="#6191ff"/><stop offset="0.407" stop-color="#ac8fff"/><stop offset="0.576" stop-color="#fc86fb"/><stop offset="0.823" stop-color="#ff3dab"/><stop offset="0.991" stop-color="#ff0385"/><stop offset="1.000" stop-color="#ff0283"/></linearGradient><linearGradient id="r75" gradientUnits="userSpaceOnUse" x1="108" x2="330" y1="0" y2="0"><stop offset="0.000" stop-color="#00a2ff"/><stop offset="0.216" stop-color="#0491ff"/><stop offset="0.248" stop-color="#228eff"/><stop offset="0.302" stop-color="#648aff"/><stop offset="0.428" stop-color="#b189ff"/><stop offset="0.595" stop-color="#fb7ffb"/><stop offset="0.865" stop-color="#ff2daa"/><stop offset="0.986" stop-color="#ff038f"/><stop offset="1.000" stop-color="#ff018c"/></linearGradient><linearGradient id="r76" gradientUnits="userSpaceOnUse" x1="110" x2="321" y1="0" y2="0"><stop offset="0.000" stop-color="#009cff"/><stop offset="0.213" stop-color="#048bff"/><stop offset="0.251" stop-color="#2888ff"/><stop offset="0.303" stop-color="#6383ff"/><stop offset="0.436" stop-color="#af82ff"/><stop offset="0.602" stop-color="#f67afe"/><stop offset="0.720" stop-color="#ff59da"/><stop offset="0.991" stop-color="#ff0398"/><stop offset="1.000" stop-color="#ff0296"/></linearGradient><linearGradient id="r77" gradientUnits="userSpaceOnUse" x1="111" x2="313" y1="0" y2="0"><stop offset="0.000" stop-color="#0097ff"/><stop offset="0.213" stop-color="#0486ff"/><stop offset="0.252" stop-color="#2781ff"/><stop offset="0.312" stop-color="#657cff"/><stop offset="0.460" stop-color="#b37bff"/><stop offset="0.624" stop-color="#f672fe"/><stop offset="0.733" stop-color="#fe55e0"/><stop offset="0.980" stop-color="#ff03a4"/><stop offset="1.000" stop-color="#ff01a0"/></linearGradient><linearGradient id="r78" gradientUnits="userSpaceOnUse" x1="112" x2="304" y1="0" y2="0"><stop offset="0.000" stop-color="#0092ff"/><stop offset="0.214" stop-color="#0480ff"/><stop offset="0.255" stop-color="#277bff"/><stop offset="0.318" stop-color="#6475ff"/><stop offset="0.474" stop-color="#b172ff"/><stop offset="0.620" stop-color="#e96dfe"/><stop offset="0.708" stop-color="#fe5cf3"/><stop offset="0.979" stop-color="#ff04ae"/><stop offset="1.000" stop-color="#ff01aa"/></linearGradient><linearGradient id="r79" gradientUnits="userSpaceOnUse" x1="114" x2="296" y1="0" y2="0"><stop offset="0.000" stop-color="#008cff"/><stop offset="0.209" stop-color="#057aff"/><stop offset="0.258" stop-color="#2c74ff"/><stop offset="0.324" stop-color="#666dff"/><stop offset="0.505" stop-color="#b76bff"/><stop offset="0.637" stop-color="#e765fe"/><stop offset="0.736" stop-color="#fe52f4"/><stop offset="0.973" stop-color="#ff04ba"/><stop offset="1.000" stop-color="#ff01b4"/></linearGradient><linearGradient id="r80" gradientUnits="userSpaceOnUse" x1="115" x2="287" y1="0" y2="0"><stop offset="0.000" stop-color="#0086ff"/><stop offset="0.209" stop-color="#0573ff"/><stop offset="0.262" stop-color="#2b6dff"/><stop offset="0.337" stop-color="#6865ff"/><stop offset="0.535" stop-color="#b962ff"/><stop offset="0.657" stop-color="#e25dfe"/><stop offset="0.773" stop-color="#fe46f6"/><stop offset="0.965" stop-color="#ff05c7"/><stop offset="1.000" stop-color="#ff01c0"/></linearGradient><linearGradient id="r81" gradientUnits="userSpaceOnUse" x1="117" x2="278" y1="0" y2="0"><stop offset="0.000" stop-color="#0080ff"/><stop offset="0.205" stop-color="#056dff"/><stop offset="0.267" stop-color="#3065ff"/><stop offset="0.348" stop-color="#6b5bff"/><stop offset="0.528" stop-color="#af57ff"/><stop offset="0.646" stop-color="#d459ff"/><stop offset="0.807" stop-color="#fe38f8"/><stop offset="0.963" stop-color="#ff06d3"/><stop offset="1.000" stop-color="#ff01cc"/></linearGradient><linearGradient id="r82" gradientUnits="userSpaceOnUse" x1="118" x2="270" y1="0" y2="0"><stop offset="0.000" stop-color="#007aff"/><stop offset="0.204" stop-color="#0566ff"/><stop offset="0.276" stop-color="#355cff"/><stop offset="0.362" stop-color="#6d50ff"/><stop offset="0.520" stop-color="#a54cff"/><stop offset="0.664" stop-color="#d051ff"/><stop offset="0.836" stop-color="#fc2afb"/><stop offset="0.967" stop-color="#ff04de"/><stop offset="1.000" stop-color="#ff01d7"/></linearGradient><linearGradient id="r83" gradientUnits="userSpaceOnUse" x1="120" x2="261" y1="0" y2="0"><stop offset="0.000" stop-color="#0073ff"/><stop offset="0.199" stop-color="#055fff"/><stop offset="0.284" stop-color="#3952ff"/><stop offset="0.376" stop-color="#6e42ff"/><stop offset="0.525" stop-color="#9f43ff"/><stop offset="0.688" stop-color="#cb48ff"/><stop offset="0.879" stop-color="#fb18fd"/><stop offset="1.000" stop-color="#fe01e5"/></linearGradient><linearGradient id="r84" gradientUnits="userSpaceOnUse" x1="121" x2="253" y1="0" y2="0"><stop offset="0.000" stop-color="#006cff"/><stop offset="0.197" stop-color="#0557ff"/><stop offset="0.303" stop-color="#4244ff"/><stop offset="0.409" stop-color="#7533ff"/><stop offset="0.697" stop-color="#c43fff"/><stop offset="0.962" stop-color="#fd04f9"/><stop offset="1.000" stop-color="#fe01f2"/></linearGradient><linearGradient id="r85" gradientUnits="userSpaceOnUse" x1="123" x2="244" y1="0" y2="0"><stop offset="0.000" stop-color="#0064ff"/><stop offset="0.190" stop-color="#054eff"/><stop offset="0.397" stop-color="#6c29ff"/><stop offset="0.702" stop-color="#ba35ff"/><stop offset="0.983" stop-color="#f702fe"/><stop offset="1.000" stop-color="#f901fd"/></linearGradient><linearGradient id="r86" gradientUnits="userSpaceOnUse" x1="125" x2="235" y1="0" y2="0"><stop offset="0.000" stop-color="#005bff"/><stop offset="0.182" stop-color="#0643ff"/><stop offset="0.391" stop-color="#6522ff"/><stop offset="0.700" stop-color="#af2bff"/><stop offset="1.000" stop-color="#ea01fe"/></linearGradient><linearGradient id="r87" gradientUnits="userSpaceOnUse" x1="127" x2="227" y1="0" y2="0"><stop offset="0.000" stop-color="#0050ff"/><stop offset="0.170" stop-color="#0637ff"/><stop offset="0.380" stop-color="#5d1dff"/><stop offset="0.650" stop-color="#9d24ff"/><stop offset="1.000" stop-color="#dc01ff"/></linearGradient><linearGradient id="r88" gradientUnits="userSpaceOnUse" x1="129" x2="218" y1="0" y2="0"><stop offset="0.000" stop-color="#0043ff"/><stop offset="0.169" stop-color="#0929ff"/><stop offset="0.438" stop-color="#6919ff"/><stop offset="0.730" stop-color="#a117ff"/><stop offset="1.000" stop-color="#cb01ff"/></linearGradient><linearGradient id="r89" gradientUnits="userSpaceOnUse" x1="131" x2="210" y1="0" y2="0"><stop offset="0.000" stop-color="#0032ff"/><stop offset="0.152" stop-color="#0920ff"/><stop offset="0.481" stop-color="#6e15ff"/><stop offset="0.823" stop-color="#a508ff"/><stop offset="1.000" stop-color="#bd00ff"/></linearGradient><linearGradient id="r90" gradientUnits="userSpaceOnUse" x1="134" x2="201" y1="0" y2="0"><stop offset="0.000" stop-color="#0021ff"/><stop offset="0.149" stop-color="#101aff"/><stop offset="0.522" stop-color="#7010ff"/><stop offset="1.000" stop-color="#ae00ff"/></linearGradient><linearGradient id="r91" gradientUnits="userSpaceOnUse" x1="136" x2="193" y1="0" y2="0"><stop offset="0.000" stop-color="#0119ff"/><stop offset="0.175" stop-color="#1c15ff"/><stop offset="0.579" stop-color="#710aff"/><stop offset="1.000" stop-color="#a000ff"/></linearGradient><linearGradient id="r92" gradientUnits="userSpaceOnUse" x1="140" x2="184" y1="0" y2="0"><stop offset="0.000" stop-color="#0914ff"/><stop offset="0.636" stop-color="#7004ff"/><stop offset="1.000" stop-color="#9100ff"/></linearGradient><linearGradient id="r93" gradientUnits="userSpaceOnUse" x1="144" x2="175" y1="0" y2="0"><stop offset="0.000" stop-color="#1c0dff"/><stop offset="0.774" stop-color="#7201ff"/><stop offset="1.000" stop-color="#8100ff"/></linearGradient><linearGradient id="r94" gradientUnits="userSpaceOnUse" x1="149" x2="167" y1="0" y2="0"><stop offset="0.000" stop-color="#3105ff"/><stop offset="1.000" stop-color="#7000ff"/></linearGradient>
 </defs>
 <path d="M21.2,8.8 C26.3,8.8 30.4,16.2 30.4,23.2 C30.4,29.6 26.4,33.6 21.2,33.6 C16,33.6 12,29.6 12,23.2 C12,16.2 16.1,8.8 21.2,8.8Z" fill="url(#egg)"/><path d="M19.5 26.8 L22.5 26.8" stroke="#7a74a8" stroke-width="0.9" opacity="0.5"/>
 <path d="M966 15.5 L978 27.5 M978 15.5 L966 27.5" stroke="#1a1a1a" stroke-width="1.3"/>
 <!-- CIE chart -->
 <rect x="78" y="181" width="402" height="408.5" fill="#e1e1e1"/>
 <g stroke="#3a3a20" stroke-opacity="0.1" stroke-width="1.5"><line x1="123" y1="182" x2="123" y2="589" /><line x1="169.5" y1="182" x2="169.5" y2="589" /><line x1="214" y1="182" x2="214" y2="589" /><line x1="259" y1="182" x2="259" y2="589" /><line x1="305.5" y1="182" x2="305.5" y2="589" /><line x1="350.5" y1="182" x2="350.5" y2="589" /><line x1="396" y1="182" x2="396" y2="589" /><line x1="442" y1="182" x2="442" y2="589" /><line x1="78" y1="226" x2="480" y2="226" /><line x1="78" y1="272" x2="480" y2="272" /><line x1="78" y1="317.5" x2="480" y2="317.5" /><line x1="78" y1="362.5" x2="480" y2="362.5" /><line x1="78" y1="408.5" x2="480" y2="408.5" /><line x1="78" y1="453.5" x2="480" y2="453.5" /><line x1="78" y1="499" x2="480" y2="499" /><line x1="78" y1="544.5" x2="480" y2="544.5" /></g>
 <g clip-path="url(#hs)" shape-rendering="crispEdges"><rect x="101" y="208" width="28" height="5" fill="url(#r0)"/><rect x="95" y="212" width="44" height="5" fill="url(#r1)"/><rect x="92" y="216" width="55" height="5" fill="url(#r2)"/><rect x="89" y="220" width="65" height="5" fill="url(#r3)"/><rect x="87" y="224" width="73" height="5" fill="url(#r4)"/><rect x="85" y="228" width="81" height="5" fill="url(#r5)"/><rect x="84" y="232" width="88" height="5" fill="url(#r6)"/><rect x="83" y="236" width="95" height="5" fill="url(#r7)"/><rect x="81" y="240" width="102" height="5" fill="url(#r8)"/><rect x="80" y="244" width="108" height="5" fill="url(#r9)"/><rect x="80" y="248" width="113" height="5" fill="url(#r10)"/><rect x="79" y="252" width="119" height="5" fill="url(#r11)"/><rect x="78" y="256" width="124" height="5" fill="url(#r12)"/><rect x="78" y="260" width="129" height="5" fill="url(#r13)"/><rect x="77" y="264" width="134" height="5" fill="url(#r14)"/><rect x="77" y="268" width="139" height="5" fill="url(#r15)"/><rect x="77" y="272" width="143" height="5" fill="url(#r16)"/><rect x="76" y="276" width="148" height="5" fill="url(#r17)"/><rect x="76" y="280" width="153" height="5" fill="url(#r18)"/><rect x="76" y="284" width="157" height="5" fill="url(#r19)"/><rect x="76" y="288" width="161" height="5" fill="url(#r20)"/><rect x="76" y="292" width="165" height="5" fill="url(#r21)"/><rect x="76" y="296" width="170" height="5" fill="url(#r22)"/><rect x="76" y="300" width="174" height="5" fill="url(#r23)"/><rect x="76" y="304" width="178" height="5" fill="url(#r24)"/><rect x="76" y="308" width="182" height="5" fill="url(#r25)"/><rect x="76" y="312" width="186" height="5" fill="url(#r26)"/><rect x="76" y="316" width="190" height="5" fill="url(#r27)"/><rect x="76" y="320" width="194" height="5" fill="url(#r28)"/><rect x="76" y="324" width="198" height="5" fill="url(#r29)"/><rect x="77" y="328" width="201" height="5" fill="url(#r30)"/><rect x="77" y="332" width="205" height="5" fill="url(#r31)"/><rect x="77" y="336" width="209" height="5" fill="url(#r32)"/><rect x="78" y="340" width="212" height="5" fill="url(#r33)"/><rect x="78" y="344" width="216" height="5" fill="url(#r34)"/><rect x="78" y="348" width="220" height="5" fill="url(#r35)"/><rect x="79" y="352" width="223" height="5" fill="url(#r36)"/><rect x="79" y="356" width="227" height="5" fill="url(#r37)"/><rect x="79" y="360" width="231" height="5" fill="url(#r38)"/><rect x="80" y="364" width="234" height="5" fill="url(#r39)"/><rect x="80" y="368" width="238" height="5" fill="url(#r40)"/><rect x="81" y="372" width="241" height="5" fill="url(#r41)"/><rect x="81" y="376" width="245" height="5" fill="url(#r42)"/><rect x="82" y="380" width="248" height="5" fill="url(#r43)"/><rect x="82" y="384" width="252" height="5" fill="url(#r44)"/><rect x="83" y="388" width="256" height="5" fill="url(#r45)"/><rect x="83" y="392" width="260" height="5" fill="url(#r46)"/><rect x="84" y="396" width="263" height="5" fill="url(#r47)"/><rect x="85" y="400" width="266" height="5" fill="url(#r48)"/><rect x="85" y="404" width="270" height="5" fill="url(#r49)"/><rect x="86" y="408" width="273" height="5" fill="url(#r50)"/><rect x="86" y="412" width="277" height="5" fill="url(#r51)"/><rect x="87" y="416" width="280" height="5" fill="url(#r52)"/><rect x="88" y="420" width="283" height="5" fill="url(#r53)"/><rect x="89" y="424" width="286" height="5" fill="url(#r54)"/><rect x="89" y="428" width="290" height="5" fill="url(#r55)"/><rect x="90" y="432" width="293" height="5" fill="url(#r56)"/><rect x="91" y="436" width="296" height="5" fill="url(#r57)"/><rect x="92" y="440" width="299" height="5" fill="url(#r58)"/><rect x="92" y="444" width="303" height="5" fill="url(#r59)"/><rect x="93" y="448" width="306" height="5" fill="url(#r60)"/><rect x="94" y="452" width="309" height="5" fill="url(#r61)"/><rect x="95" y="456" width="312" height="5" fill="url(#r62)"/><rect x="96" y="460" width="315" height="5" fill="url(#r63)"/><rect x="97" y="464" width="318" height="5" fill="url(#r64)"/><rect x="98" y="468" width="317" height="5" fill="url(#r65)"/><rect x="99" y="472" width="308" height="5" fill="url(#r66)"/><rect x="100" y="476" width="298" height="5" fill="url(#r67)"/><rect x="101" y="480" width="289" height="5" fill="url(#r68)"/><rect x="102" y="484" width="279" height="5" fill="url(#r69)"/><rect x="103" y="488" width="270" height="5" fill="url(#r70)"/><rect x="104" y="492" width="260" height="5" fill="url(#r71)"/><rect x="105" y="496" width="251" height="5" fill="url(#r72)"/><rect x="106" y="500" width="241" height="5" fill="url(#r73)"/><rect x="107" y="504" width="231" height="5" fill="url(#r74)"/><rect x="108" y="508" width="222" height="5" fill="url(#r75)"/><rect x="110" y="512" width="211" height="5" fill="url(#r76)"/><rect x="111" y="516" width="202" height="5" fill="url(#r77)"/><rect x="112" y="520" width="192" height="5" fill="url(#r78)"/><rect x="114" y="524" width="182" height="5" fill="url(#r79)"/><rect x="115" y="528" width="172" height="5" fill="url(#r80)"/><rect x="117" y="532" width="161" height="5" fill="url(#r81)"/><rect x="118" y="536" width="152" height="5" fill="url(#r82)"/><rect x="120" y="540" width="141" height="5" fill="url(#r83)"/><rect x="121" y="544" width="132" height="5" fill="url(#r84)"/><rect x="123" y="548" width="121" height="5" fill="url(#r85)"/><rect x="125" y="552" width="110" height="5" fill="url(#r86)"/><rect x="127" y="556" width="100" height="5" fill="url(#r87)"/><rect x="129" y="560" width="89" height="5" fill="url(#r88)"/><rect x="131" y="564" width="79" height="5" fill="url(#r89)"/><rect x="134" y="568" width="67" height="5" fill="url(#r90)"/><rect x="136" y="572" width="57" height="5" fill="url(#r91)"/><rect x="140" y="576" width="44" height="5" fill="url(#r92)"/><rect x="144" y="580" width="31" height="5" fill="url(#r93)"/><rect x="149" y="584" width="18" height="5" fill="url(#r94)"/></g>
 <g stroke="#3a3a20" stroke-opacity="0.1" stroke-width="1.5"><line x1="123" y1="182" x2="123" y2="589" /><line x1="169.5" y1="182" x2="169.5" y2="589" /><line x1="214" y1="182" x2="214" y2="589" /><line x1="259" y1="182" x2="259" y2="589" /><line x1="305.5" y1="182" x2="305.5" y2="589" /><line x1="350.5" y1="182" x2="350.5" y2="589" /><line x1="396" y1="182" x2="396" y2="589" /><line x1="442" y1="182" x2="442" y2="589" /><line x1="78" y1="226" x2="480" y2="226" /><line x1="78" y1="272" x2="480" y2="272" /><line x1="78" y1="317.5" x2="480" y2="317.5" /><line x1="78" y1="362.5" x2="480" y2="362.5" /><line x1="78" y1="408.5" x2="480" y2="408.5" /><line x1="78" y1="453.5" x2="480" y2="453.5" /><line x1="78" y1="499" x2="480" y2="499" /><line x1="78" y1="544.5" x2="480" y2="544.5" /></g>
 <line x1="78" y1="181.5" x2="480" y2="181.5" stroke="#c4c4c4" stroke-width="2"/>
 <line x1="78" y1="181" x2="78" y2="590" stroke="#808080" stroke-width="2"/>
 <line x1="77" y1="589.5" x2="480" y2="589.5" stroke="#808080" stroke-width="2"/>
 <polygon points="217.3,317.1 362.4,437.6 151.4,551.8" fill="none" stroke="#f3a030" stroke-width="1.7"/>
 <g stroke="#101810" fill="none" stroke-linecap="round"><line x1="154.9" y1="243.5" x2="139.1" y2="564.1" stroke-width="2"/><polyline points="154.9,243.5 338.4,408.8 139.1,564.1" stroke-width="1.2" stroke-linejoin="miter"/></g>
 <g clip-path="url(#cc)" font-family="Liberation Sans" font-size="13" fill="#383838" stroke="#383838" stroke-width="0.45">
  <text x="82" y="193">y</text>
  <text x="82" y="229.7">0.8</text>
  <text x="82" y="321.8">0.6</text>
  <text x="82" y="412.6">0.4</text>
  <text x="82" y="503.5">0.2</text>
  <text x="82" y="586">0</text>
  <text x="160.5" y="586">0.2</text>
  <text x="251" y="586">0.4</text>
  <text x="341.5" y="586">0.6</text>
  <text x="433" y="586">0.8</text>
  <text x="476" y="586">x</text>
 </g>
 <!-- bar chart -->
 <rect x="518" y="181" width="408.5" height="408.5" fill="url(#bg)" stroke="#181410" stroke-width="2"/>
 <g stroke="#000" stroke-opacity="0.08" stroke-width="1">
  <line x1="518" y1="262.5" x2="926" y2="262.5"/><line x1="518" y1="344" x2="926" y2="344"/>
  <line x1="518" y1="424" x2="926" y2="424"/><line x1="518" y1="506" x2="926" y2="506"/>
 </g>
 <g font-family="Liberation Sans" font-size="13" font-weight="bold" fill="#000" fill-opacity="0.5" letter-spacing="-0.2">
  <text x="519" y="193">10 d E 94</text>
  <text x="519" y="267">8 d E 94</text>
  <text x="519" y="349">6 d E 94</text>
  <text x="519" y="429">4 d E 94</text>
  <text x="519" y="511">2 d E 94</text>
 </g>
 <rect x="590.05" y="317.45" width="14.5" height="272.05" fill="#333333" stroke="#111" stroke-width="1.6"/><rect x="609.25" y="181.75" width="14.5" height="407.75" fill="#444444" stroke="#111" stroke-width="1.6"/><rect x="628.45" y="181.75" width="14.5" height="407.75" fill="#888888" stroke="#111" stroke-width="1.6"/><rect x="647.95" y="246.75" width="14.5" height="342.75" fill="#c8c8c8" stroke="#111" stroke-width="1.6"/><rect x="686.65" y="243.55" width="14.5" height="345.95" fill="#ff0000" stroke="#111" stroke-width="1.6"/><rect x="705.55" y="181.75" width="14.5" height="407.75" fill="#00ff00" stroke="#111" stroke-width="1.6"/><rect x="725.05" y="181.75" width="14.5" height="407.75" fill="#0000ff" stroke="#111" stroke-width="1.6"/><rect x="743.95" y="181.75" width="14.5" height="407.75" fill="#00ffff" stroke="#111" stroke-width="1.6"/><rect x="763.45" y="280.75" width="14.5" height="308.75" fill="#ff00ff" stroke="#111" stroke-width="1.6"/><rect x="782.55" y="238.75" width="14.5" height="350.75" fill="#ffff00" stroke="#111" stroke-width="1.6"/><rect x="801.75" y="275.65" width="14.5" height="313.85" fill="#b05858" stroke="#111" stroke-width="1.6"/><rect x="820.95" y="181.75" width="14.5" height="407.75" fill="#58a858" stroke="#111" stroke-width="1.6"/><rect x="840.25" y="243.75" width="14.5" height="345.75" fill="#5858b0" stroke="#111" stroke-width="1.6"/><rect x="859.45" y="407.55" width="14.5" height="181.95" fill="#58a8a8" stroke="#111" stroke-width="1.6"/><rect x="879.05" y="219.75" width="14.5" height="369.75" fill="#b058b0" stroke="#111" stroke-width="1.6"/><rect x="898.55" y="193.75" width="14.5" height="395.75" fill="#b0a858" stroke="#111" stroke-width="1.6"/>
 <!-- radios -->
 <circle cx="140.4" cy="161.3" r="10" fill="#0f62b4"/>
 <circle cx="140.4" cy="161.3" r="4.3" fill="#fff"/>
 <circle cx="227.3" cy="161.3" r="9.5" fill="#f6f6f6" stroke="#858585" stroke-width="1.2"/>
 <circle cx="360.1" cy="161.3" r="9.5" fill="#f6f6f6" stroke="#858585" stroke-width="1.2"/>
</svg>
<div class="btn" style="left:31px;top:746.5px;width:117px;border:1.7px solid #3c88d0"></div>
<div class="btn" style="left:168px;top:747px;width:115px"></div>
<div class="btn" style="left:719px;top:747px;width:115px"></div>
<div class="btn" style="left:855px;top:747px;width:115px"></div>
<div class="abs" style="left:41.86px;top:12.05px;font-size:19px;letter-spacing:0.0px;line-height:1;color:#111111">blue eye pro</div>
<div class="abs" style="left:14.0px;top:48.97px;font-size:18.5px;letter-spacing:0.135px;line-height:1;color:#1c1c24">Tools</div>
<div class="abs" style="left:80.34px;top:48.97px;font-size:18.5px;letter-spacing:0.036px;line-height:1;color:#1c1c24">Device</div>
<div class="abs" style="left:159.86px;top:48.46px;font-size:18.5px;letter-spacing:0.3px;line-height:1;color:#1c1c24">Help</div>
<div class="abs" style="left:635.98px;top:115.31px;font-size:37px;letter-spacing:0.758px;line-height:1;font-weight:bold;-webkit-text-stroke:0.6px #0a0a0a;color:#0a0a0a">Calibration Report</div>
<div class="abs" style="left:154.66px;top:155.14px;font-size:16px;letter-spacing:-0.96px;line-height:1;color:#1c1c24">sRGB</div>
<div class="abs" style="left:243.12px;top:155.14px;font-size:16px;letter-spacing:0.044px;line-height:1;color:#1c1c24">Adobe RGB</div>
<div class="abs" style="left:374.54px;top:155.14px;font-size:16px;letter-spacing:0.789px;line-height:1;color:#1c1c24">ISOcoated</div>
<div class="abs" style="left:178.0px;top:610.98px;font-size:18px;letter-spacing:0.648px;line-height:1;color:#141428">Target</div>
<div class="abs" style="left:279.86px;top:610.98px;font-size:18px;letter-spacing:0.93px;line-height:1;color:#141428">Current</div>
<div class="abs" style="left:382.1px;top:610.98px;font-size:18px;letter-spacing:0.788px;line-height:1;color:#141428">Deviation</div>
<div class="abs" style="left:75.0px;top:635.6px;font-size:18px;letter-spacing:1.485px;line-height:1;color:#141428">Gamma</div>
<div class="abs" style="left:74.1px;top:659.6px;font-size:18px;letter-spacing:0.72px;line-height:1;color:#141428">Kelvin</div>
<div class="abs" style="left:75.0px;top:683.6px;font-size:18px;letter-spacing:1.125px;line-height:1;color:#141428">cd/m2</div>
<div class="abs" style="left:177.24px;top:635.6px;font-size:18px;letter-spacing:0.63px;line-height:1;color:#141428">2.2</div>
<div class="abs" style="left:177.24px;top:659.6px;font-size:18px;letter-spacing:1.14px;line-height:1;color:#141428">6500</div>
<div class="abs" style="left:176.34px;top:683.6px;font-size:18px;letter-spacing:1.08px;line-height:1;color:#141428">120</div>
<div class="abs" style="left:279.86px;top:635.6px;font-size:18px;letter-spacing:0.72px;line-height:1;color:#f2843a">1.4</div>
<div class="abs" style="left:279.86px;top:659.6px;font-size:18px;letter-spacing:1.485px;line-height:1;color:#f2843a">12006</div>
<div class="abs" style="left:279.86px;top:683.6px;font-size:18px;letter-spacing:1.8px;line-height:1;color:#f2843a">199</div>
<div class="abs" style="left:383.0px;top:635.6px;font-size:18px;letter-spacing:1.35px;line-height:1;color:#f2843a">38%</div>
<div class="abs" style="left:383.0px;top:659.6px;font-size:18px;letter-spacing:1.35px;line-height:1;color:#f2843a">85%</div>
<div class="abs" style="left:383.0px;top:683.6px;font-size:18px;letter-spacing:1.35px;line-height:1;color:#f2843a">66%</div>
<div class="abs" style="left:517.1px;top:610.84px;font-size:18px;letter-spacing:0.53px;line-height:1;color:#141428">Delta E Average</div>
<div class="abs" style="left:517.1px;top:634.84px;font-size:18px;letter-spacing:0.82px;line-height:1;color:#141428">Delta E Maximum</div>
<div class="abs" style="left:698.24px;top:610.84px;font-size:18px;letter-spacing:0.81px;line-height:1;color:#f2843a">9.4</div>
<div class="abs" style="left:694.72px;top:634.84px;font-size:18px;letter-spacing:0.72px;line-height:1;color:#f2843a">19.0</div>
<div class="abs" style="left:46.72px;top:756.62px;font-size:16.5px;letter-spacing:0.141px;line-height:1;color:#1a1a24">Main Menu</div>
<div class="abs" style="left:184.0px;top:755.75px;font-size:16.5px;letter-spacing:0.342px;line-height:1;color:#1a1a24">Calibration</div>
<div class="abs" style="left:754.36px;top:755.75px;font-size:16.5px;letter-spacing:0.54px;line-height:1;color:#1a1a24">Save</div>
<div class="abs" style="left:895.0px;top:755.75px;font-size:16.5px;letter-spacing:0.66px;line-height:1;color:#1a1a24">Quit</div>
<div class="abs" style="left:345.6px;top:259.05px;font-size:21px;letter-spacing:0.147px;line-height:1;font-weight:bold;color:#0a0a0a">Monitor</div>
<div class="abs" style="left:346.52px;top:285.92px;font-size:23px;letter-spacing:-1.355px;line-height:1;font-weight:bold;color:#f0a020">sRGB</div>
</body></html>
